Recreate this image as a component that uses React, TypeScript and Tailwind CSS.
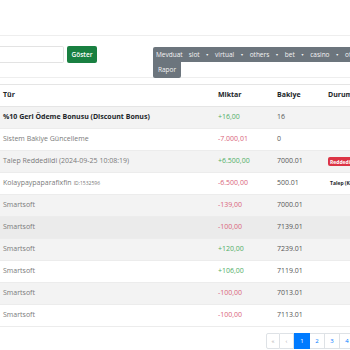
import { useState } from "react";

const rows = [
    { tur: "%10 Geri Ödeme Bonusu (Discount Bonus)", bold: true, miktar: "+16,00", bakiye: "16", durum: "" },
    { tur: "Sistem Bakiye Güncelleme", miktar: "-7.000,01", bakiye: "0", durum: "" },
    { tur: "Talep Reddedildi (2024-09-25 10:08:19)", miktar: "+6.500,00", bakiye: "7000.01", durum: "red" },
    { tur: "Kolaypaypaparafixfin", id: "ID:1532596", miktar: "-6.500,00", bakiye: "500.01", durum: "talep" },
    { tur: "Smartsoft", miktar: "-139,00", bakiye: "7000.01", durum: "" },
    { tur: "Smartsoft", miktar: "-100,00", bakiye: "7139.01", durum: "" },
    { tur: "Smartsoft", miktar: "+120,00", bakiye: "7239.01", durum: "" },
    { tur: "Smartsoft", miktar: "+106,00", bakiye: "7119.01", durum: "" },
    { tur: "Smartsoft", miktar: "-100,00", bakiye: "7013.01", durum: "" },
    { tur: "Smartsoft", miktar: "-100,00", bakiye: "7113.01", durum: "" },
];

const menu = [
    { label: "Mevduat", caret: false },
    { label: "slot", caret: true },
    { label: "virtual", caret: true },
    { label: "others", caret: true },
    { label: "bet", caret: true },
    { label: "casino", caret: true },
    { label: "other", caret: true },
    { label: "Rapor", caret: false },
];

export default function App() {
    const [hover] = useState(5);

    return (
        <div className="w-[350px] h-[350px] overflow-hidden bg-white font-['Open_Sans',sans-serif] text-[#212529]">
            <div className="h-[36px] border-b border-[#eeeeee]"></div>

            <div className="flex items-start h-[42px] border-b border-[#eeeeee] pt-[10px]">
                <input type="text" className="w-[64px] h-[17px] border border-[#e3e3e3] border-l-0 rounded-r-[2px] shrink-0" />
                <button className="ml-[3px] w-[30px] h-[17px] bg-[#198041] text-white text-[6.5px] font-semibold rounded-[2px] shrink-0">Göster</button>
                <div className="ml-[56px] mt-[1px] flex flex-wrap w-[240px] shrink-0">
                    {menu.map((m, i) => (
                        <div key={i} className={"bg-[#6c757d] text-[#f4f4f4] text-[6.5px] flex items-center whitespace-nowrap " + (i === 0 ? "rounded-tl-[2px] " : "") + (i === 7 ? "h-[16px] rounded-b-[2px] px-[5px]" : "h-[15px] pl-[3px] pr-[3px]")}>
                            {m.label}
                            {m.caret && <span className="ml-[6px] text-[3.5px]">▼</span>}
                        </div>
                    ))}
                </div>
            </div>

            <table className="mt-[6px] w-[420px] table-fixed border-collapse text-[7px]">
                <colgroup>
                    <col className="w-[215px]" />
                    <col className="w-[59px]" />
                    <col className="w-[51px]" />
                    <col className="w-[95px]" />
                </colgroup>
                <thead>
                    <tr className="h-[22px] border-t border-b border-[#e5e5e5] text-left">
                        <th className="pl-[3px] font-bold">Tür</th>
                        <th className="pl-[3px] font-bold">Miktar</th>
                        <th className="pl-[3px] font-bold">Bakiye</th>
                        <th className="pl-[3px] font-bold">Durum</th>
                    </tr>
                </thead>
                <tbody>
                    {rows.map((r, i) => (
                        <tr key={i} className={"h-[22px] border-b border-[#ececec] " + (i === hover ? "bg-[#ebebeb]" : i % 2 === 0 ? "bg-[#f3f3f3]" : "bg-white")}>
                            <td className={"pl-[3px] whitespace-nowrap " + (r.bold ? "font-bold text-[#212529]" : "text-[#7a7a7a]")}>
                                {r.tur}
                                {r.id && <span className="ml-[2px] text-[5px] text-[#777777]">{r.id}</span>}
                            </td>
                            <td className={"pl-[3px] " + (r.miktar.startsWith("+") ? "text-[#4fae66]" : "text-[#d9657a]")}>{r.miktar}</td>
                            <td className="pl-[3px] text-[#555555]">{r.bakiye}</td>
                            <td className="pl-[3px] whitespace-nowrap">
                                {r.durum === "red" && <span className="bg-[#dc3545] text-white font-bold text-[5px] px-[2px] py-[1.5px] rounded-[2px]">Reddedildi</span>}
                                {r.durum === "talep" && <span className="font-bold text-[5px] text-[#212529] ml-[2px]">Talep (Kolaypay)</span>}
                            </td>
                        </tr>
                    ))}
                </tbody>
            </table>

            <div className="flex mt-[6px] pl-[266px]">
                <div className="flex shrink-0 text-[6px]">
                    <span className="w-[14px] h-[16px] flex items-center justify-center border border-[#dee2e6] text-[#aaaaaa] rounded-l-[2px]">«</span>
                    <span className="w-[14px] h-[16px] flex items-center justify-center border border-l-0 border-[#dee2e6] text-[#aaaaaa]">‹</span>
                    <span className="w-[16px] h-[16px] flex items-center justify-center bg-[#007bff] text-white">1</span>
                    <span className="w-[15px] h-[16px] flex items-center justify-center border border-l-0 border-[#dee2e6] text-[#007bff]">2</span>
                    <span className="w-[15px] h-[16px] flex items-center justify-center border border-l-0 border-[#dee2e6] text-[#007bff]">3</span>
                    <span className="w-[15px] h-[16px] flex items-center justify-center border border-l-0 border-[#dee2e6] text-[#007bff]">4</span>
                </div>
            </div>
        </div>
    );
}
